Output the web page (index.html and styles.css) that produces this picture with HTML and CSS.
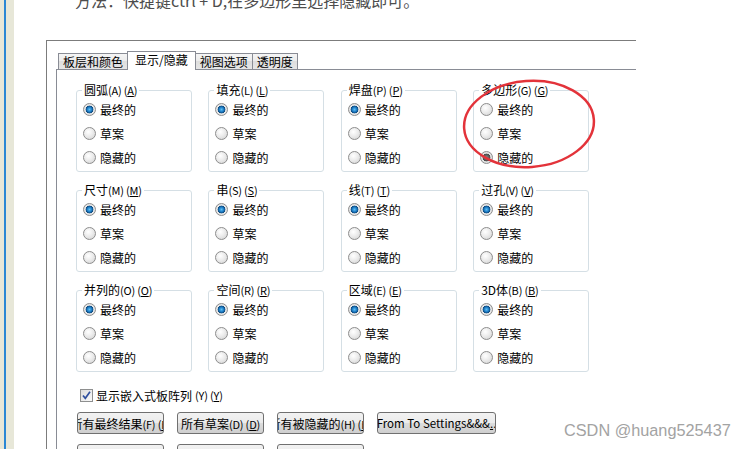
FILE: index.html
```html
<!DOCTYPE html>
<html lang="zh-CN">
  <head>
    <meta charset="UTF-8" />
    <title>显示/隐藏</title>
    <link rel="stylesheet" href="styles.css">
  </head>
  <body>
    <div class="page">
      <aside class="rail"></aside>

      <main class="article">
        <p class="intro">方法：快捷键ctrl + D,在多边形里选择隐藏即可。</p>

        <div class="dialog">
          <div class="tabs">
            <span class="tab">板层和颜色</span>
            <span class="tab active">显示/隐藏</span>
            <span class="tab">视图选项</span>
            <span class="tab">透明度</span>
          </div>

          <div class="panel">
            <div class="groups">
              <!-- row 1 -->
              <fieldset class="group">
                <legend>圆弧<span class="key">(A) (<u>A</u>)</span></legend>
                <label class="opt"><input class="radio" type="radio" name="arc" checked>最终的</label>
                <label class="opt"><input class="radio" type="radio" name="arc">草案</label>
                <label class="opt"><input class="radio" type="radio" name="arc">隐藏的</label>
              </fieldset>
              <fieldset class="group">
                <legend>填充<span class="key">(L) (<u>L</u>)</span></legend>
                <label class="opt"><input class="radio" type="radio" name="fill" checked>最终的</label>
                <label class="opt"><input class="radio" type="radio" name="fill">草案</label>
                <label class="opt"><input class="radio" type="radio" name="fill">隐藏的</label>
              </fieldset>
              <fieldset class="group">
                <legend>焊盘<span class="key">(P) (<u>P</u>)</span></legend>
                <label class="opt"><input class="radio" type="radio" name="pad" checked>最终的</label>
                <label class="opt"><input class="radio" type="radio" name="pad">草案</label>
                <label class="opt"><input class="radio" type="radio" name="pad">隐藏的</label>
              </fieldset>
              <fieldset class="group">
                <legend>多边形<span class="key">(G) (<u>G</u>)</span></legend>
                <label class="opt"><input class="radio" type="radio" name="poly">最终的</label>
                <label class="opt"><input class="radio" type="radio" name="poly">草案</label>
                <label class="opt"><input class="radio muted" type="radio" name="poly" checked>隐藏的</label>
              </fieldset>

              <!-- row 2 -->
              <fieldset class="group">
                <legend>尺寸<span class="key">(M) (<u>M</u>)</span></legend>
                <label class="opt"><input class="radio" type="radio" name="dim" checked>最终的</label>
                <label class="opt"><input class="radio" type="radio" name="dim">草案</label>
                <label class="opt"><input class="radio" type="radio" name="dim">隐藏的</label>
              </fieldset>
              <fieldset class="group">
                <legend>串<span class="key">(S) (<u>S</u>)</span></legend>
                <label class="opt"><input class="radio" type="radio" name="str" checked>最终的</label>
                <label class="opt"><input class="radio" type="radio" name="str">草案</label>
                <label class="opt"><input class="radio" type="radio" name="str">隐藏的</label>
              </fieldset>
              <fieldset class="group">
                <legend>线<span class="key">(T) (<u>T</u>)</span></legend>
                <label class="opt"><input class="radio" type="radio" name="track" checked>最终的</label>
                <label class="opt"><input class="radio" type="radio" name="track">草案</label>
                <label class="opt"><input class="radio" type="radio" name="track">隐藏的</label>
              </fieldset>
              <fieldset class="group">
                <legend>过孔<span class="key">(V) (<u>V</u>)</span></legend>
                <label class="opt"><input class="radio" type="radio" name="via" checked>最终的</label>
                <label class="opt"><input class="radio" type="radio" name="via">草案</label>
                <label class="opt"><input class="radio" type="radio" name="via">隐藏的</label>
              </fieldset>

              <!-- row 3 -->
              <fieldset class="group">
                <legend>并列的<span class="key">(O) (<u>O</u>)</span></legend>
                <label class="opt"><input class="radio" type="radio" name="coord" checked>最终的</label>
                <label class="opt"><input class="radio" type="radio" name="coord">草案</label>
                <label class="opt"><input class="radio" type="radio" name="coord">隐藏的</label>
              </fieldset>
              <fieldset class="group">
                <legend>空间<span class="key">(R) (<u>R</u>)</span></legend>
                <label class="opt"><input class="radio" type="radio" name="room" checked>最终的</label>
                <label class="opt"><input class="radio" type="radio" name="room">草案</label>
                <label class="opt"><input class="radio" type="radio" name="room">隐藏的</label>
              </fieldset>
              <fieldset class="group">
                <legend>区域<span class="key">(E) (<u>E</u>)</span></legend>
                <label class="opt"><input class="radio" type="radio" name="region" checked>最终的</label>
                <label class="opt"><input class="radio" type="radio" name="region">草案</label>
                <label class="opt"><input class="radio" type="radio" name="region">隐藏的</label>
              </fieldset>
              <fieldset class="group">
                <legend>3D体<span class="key">(B) (<u>B</u>)</span></legend>
                <label class="opt"><input class="radio" type="radio" name="body3d" checked>最终的</label>
                <label class="opt"><input class="radio" type="radio" name="body3d">草案</label>
                <label class="opt"><input class="radio" type="radio" name="body3d">隐藏的</label>
              </fieldset>
            </div>

            <label class="check-row">
              <span class="box">
                <svg width="11" height="11" viewBox="0 0 11 11">
                  <path d="M2 5.5 L4.3 8.3 L9 1.8" fill="none" stroke="#2f4f9e" stroke-width="1.7" />
                </svg>
              </span>
              显示嵌入式板阵列<span class="key">(Y) (<u>Y</u>)</span>
            </label>

            <div class="buttons">
              <button class="btn"><span>所有最终结果<span class="key">(F) (<u>F</u>)</span></span></button>
              <button class="btn"><span>所有草案<span class="key">(D) (<u>D</u>)</span></span></button>
              <button class="btn"><span>所有被隐藏的<span class="key">(H) (<u>H</u>)</span></span></button>
              <button class="btn latin"><span>From To Settings&amp;&amp;&amp;<u>.</u>.</span></button>
              <button class="btn"></button>
              <button class="btn"></button>
              <button class="btn"></button>
            </div>
          </div>
        </div>
      </main>
    </div>

    <!-- red circle drawn over the polygon group -->
    <svg class="mark" width="747" height="449" viewBox="0 0 747 449">
      <ellipse cx="529" cy="124" rx="65" ry="43" transform="rotate(-4 529 124)"
        fill="none" stroke="#e3333a" stroke-width="2.5" />
    </svg>

    <div class="watermark">CSDN @huang525437</div>
  </body>
</html>
```

FILE: styles.css
```css
body {
  margin: 0;
  background: #fff;
  font-family: "Noto Sans CJK SC", sans-serif;
  overflow: hidden;
}

.page {
  display: flex;
  height: 449px;
}

.rail {
  flex: 0 0 14px;
  background: linear-gradient(to right, #e7e7d8 0 4px, #2a87d4 4px 6px, #e7e7d8 6px);
}

.article {
  flex: 1;
  min-width: 0;
}

.intro {
  margin: -12px 0 0 61px;
  font-size: 16px;
  line-height: 24px;
  color: #4d4d4d;
  white-space: nowrap;
}

/* dialog */
.dialog {
  box-sizing: border-box;
  width: 590px;
  margin: 28px 0 0 32px;
  padding: 10px 0 0 9px;
  border-top: 1px solid #7c7c7c;
  border-left: 1px solid #7c7c7c;
  font-size: 12px;
  color: #000;
}

.tabs {
  display: flex;
  align-items: flex-end;
  height: 18px;
  padding-left: 2px;
}

.tab {
  box-sizing: border-box;
  height: 16px;
  padding: 0 4px;
  margin-left: -1px;
  border: 1px solid #898c95;
  border-bottom: none;
  background: linear-gradient(#f5f5f5, #ebebeb 50%, #dedede 50%, #e6e6e6);
  line-height: 15px;
  white-space: nowrap;
}

.tab:first-child {
  margin-left: 0;
}

.tab.active {
  position: relative;
  z-index: 1;
  height: 19px;
  margin-bottom: -1px;
  padding: 0 7px;
  background: #fff;
  line-height: 16px;
}

.panel {
  padding: 13px 0 20px 19px;
  border-top: 1px solid #898c95;
  border-left: 1px solid #898c95;
}

.groups {
  display: grid;
  grid-template-columns: repeat(4, 116px);
  column-gap: 16.4px;
  row-gap: 11px;
}

.group {
  min-width: 0;
  margin: 0;
  padding: 0 0 2px 6px;
  border: 1px solid #d5dfe5;
  border-radius: 3px;
}

.group legend {
  margin-left: -1px;
  padding: 0 2px;
  line-height: 14px;
  white-space: nowrap;
}

.key {
  font-size: 11px;
  letter-spacing: -0.2px;
}

.opt {
  display: flex;
  align-items: center;
  gap: 4px;
  height: 24px;
  white-space: nowrap;
}

.radio {
  appearance: none;
  flex: none;
  box-sizing: border-box;
  width: 13px;
  height: 13px;
  margin: 0;
  border: 1px solid #8d8d8d;
  border-radius: 50%;
  background: radial-gradient(circle at 40% 35%, #fff 0, #ececec 45%, #cfcfcf 100%);
}

.radio:checked {
  background: radial-gradient(circle at 50% 50%, #5fc0f5 0, #1f7fc7 2.2px, #0c4a80 3.6px, #eaeaea 4.2px, #d2d2d2 100%);
}

.radio.muted:checked {
  background: radial-gradient(circle at 50% 50%, #8a8a8a 0, #4a4a4a 3.6px, #e6e6e6 4.2px, #cfcfcf 100%);
}

.check-row {
  display: flex;
  align-items: center;
  gap: 3px;
  height: 16px;
  margin: 15px 0 0 4px;
  white-space: nowrap;
}

.box {
  display: flex;
  align-items: center;
  justify-content: center;
  box-sizing: border-box;
  width: 13px;
  height: 13px;
  border: 1px solid #8e8f8f;
  background: linear-gradient(135deg, #dcdcdc, #fafafa);
}

.buttons {
  display: grid;
  grid-template-columns: repeat(3, 87px) 119px;
  gap: 10px 13px;
  margin: 9px 0 0 1px;
}

.btn {
  display: flex;
  align-items: center;
  justify-content: center;
  height: 22px;
  padding: 0;
  overflow: hidden;
  white-space: nowrap;
  border: 1px solid #707070;
  border-radius: 3px;
  background: linear-gradient(#f2f2f2, #ebebeb 50%, #dddddd 50%, #cfcfcf);
  font: 12px "Noto Sans CJK SC", sans-serif;
  color: #000;
}

.btn.latin {
  font-size: 11.5px;
}

/* overlays */
.mark {
  position: absolute;
  top: 0;
  left: 0;
  pointer-events: none;
}

.watermark {
  position: absolute;
  left: 564px;
  top: 422px;
  font: 16.3px "Liberation Sans", sans-serif;
  line-height: 16px;
  color: #a3a3a3;
  white-space: nowrap;
}
```
